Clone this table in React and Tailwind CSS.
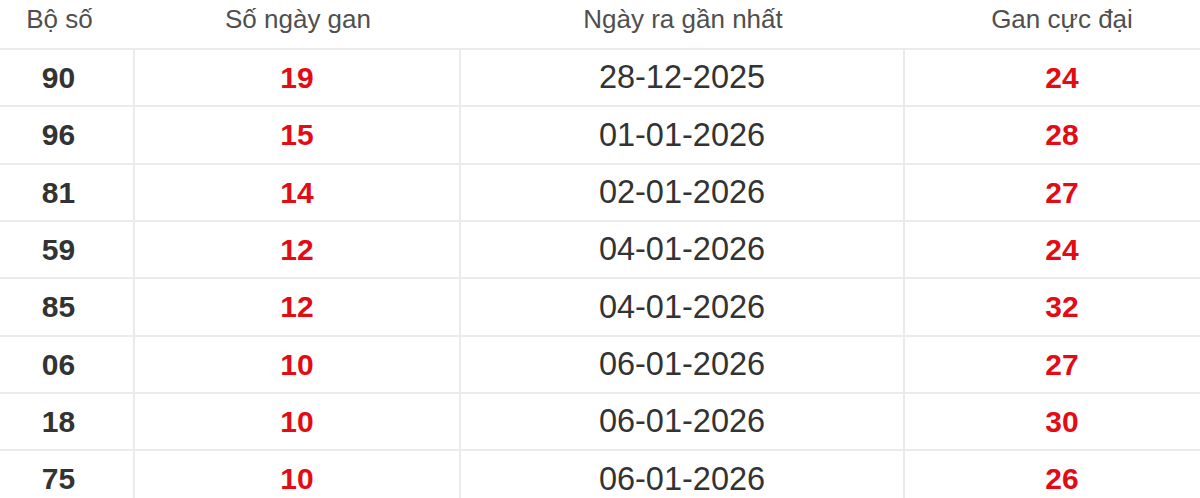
const rows = [
  ["90", "19", "28-12-2025", "24"],
  ["96", "15", "01-01-2026", "28"],
  ["81", "14", "02-01-2026", "27"],
  ["59", "12", "04-01-2026", "24"],
  ["85", "12", "04-01-2026", "32"],
  ["06", "10", "06-01-2026", "27"],
  ["18", "10", "06-01-2026", "30"],
  ["75", "10", "06-01-2026", "26"],
];

export default function App() {
  return (
    <div
      className="w-[1200px] h-[498px] overflow-hidden bg-white"
      style={{ fontFamily: '"Liberation Sans", Arial, sans-serif' }}
    >
      <div className="flex h-[50px] border-b-2 border-[#ebebeb] text-[26px] leading-none text-[#4f4f4f]">
        <div className="w-[135px] shrink-0 pr-[16px] pt-[6px] text-center">Bộ số</div>
        <div className="w-[326px] shrink-0 pt-[6px] text-center">Số ngày gan</div>
        <div className="w-[444px] shrink-0 pt-[6px] text-center">Ngày ra gần nhất</div>
        <div className="flex-1 pl-[19px] pt-[6px] text-center">Gan cực đại</div>
      </div>
      {rows.map((r, i) => (
        <div key={i} className="flex h-[57.33px] border-b-2 border-[#ebebeb]">
          <div className="flex w-[135px] shrink-0 items-center justify-center border-r-2 border-[#ebebeb] pr-[16px] text-[30px] font-bold text-[#333333]">
            {r[0]}
          </div>
          <div className="flex w-[326px] shrink-0 items-center justify-center border-r-2 border-[#ebebeb] text-[30px] font-bold text-[#e30b14]">
            {r[1]}
          </div>
          <div className="flex w-[444px] shrink-0 items-center justify-center border-r-2 border-[#ebebeb] text-[32.5px] text-[#333333]">
            {r[2]}
          </div>
          <div className="flex flex-1 items-center justify-center pl-[19px] text-[30px] font-bold text-[#e30b14]">
            {r[3]}
          </div>
        </div>
      ))}
    </div>
  );
}
